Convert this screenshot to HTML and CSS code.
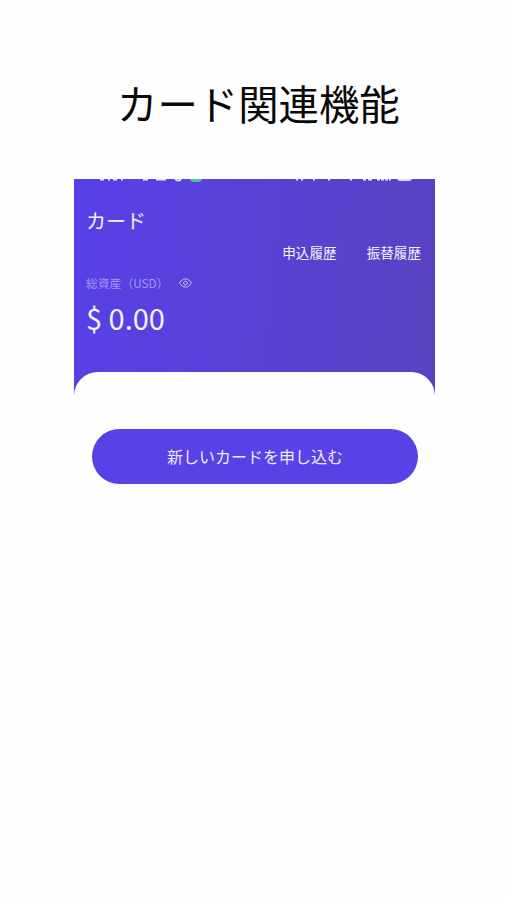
FILE: index.html
```html
<!DOCTYPE html>
<html lang="ja">
<head>
  <meta charset="utf-8">
  <title>カード関連機能</title>
  <link rel="stylesheet" href="styles.css">
</head>
<body>
  <h1>カード関連機能</h1>
  <div class="screen">
    <div class="header">
      <!-- lower edge of the status bar -->
      <svg class="status" width="361" height="4" viewBox="0 0 361 4" fill="none" stroke="#fff" stroke-opacity=".85">
        <path d="M26 .7h4M34 .7h2M39 .7h4M47 .7h2M69 .7h5M82 .7h10" stroke-width="1.4"/>
        <path d="M101 0q3.5 3 6 0" stroke-width="2"/>
        <path d="M116 0h12q-1 3-4 3h-4q-3 0-4-3z" fill="#43c9a4" stroke="none"/>
        <path d="M222 .7h2M227 .7h2M239 .7h2M254 .7h2M276 .7h2M289 .7h3M294 .7h4M303 .7h3M307 .7h3M311 .7h3M315 .7h2" stroke-width="1.4"/>
        <path d="M323 0h15q-1 2-3 2h-9q-2 0-3-2z" fill="#fff" fill-opacity=".8" stroke="none"/>
      </svg>
      <h2>カード</h2>
      <div class="links">
        <span>申込履歴</span>
        <span>振替履歴</span>
      </div>
      <div class="label">
        <span>総資産（USD）</span>
        <svg width="13" height="10" viewBox="0 0 13 10" fill="none" stroke="#c3bcf5">
          <path d="M.6 5C3.4-.5 9.6-.5 12.4 5 9.6 10.5 3.4 10.5.6 5z"/>
          <circle cx="6.5" cy="5" r="1.9"/>
        </svg>
      </div>
      <div class="amount">$ 0.00</div>
    </div>
    <div class="sheet">
      <button>新しいカードを申し込む</button>
    </div>
  </div>
</body>
</html>
```

FILE: styles.css
```css
body {
  margin: 0;
  background-color: #fefefe;
  font-family: "Noto Sans CJK JP", sans-serif;
}
h1 {
  margin: 73px 0 0 117px;
  font-size: 40.4px;
  line-height: 60px;
  font-weight: 400;
  color: #090909;
  white-space: nowrap;
}
.screen {
  width: 361px;
  margin: 46px 0 0 74px;
  background: linear-gradient(95deg, #5840e9, #5942c0) no-repeat;
  background-size: 100% 216px;
}
.header {
  height: 193px;
  color: #f3f0ff;
}
.status {
  display: block;
}
h2 {
  margin: 23px 0 0 12px;
  font-size: 20px;
  line-height: 30px;
  font-weight: 400;
}
.links {
  display: flex;
  justify-content: flex-end;
  gap: 30px;
  padding-right: 14px;
  margin-top: 6px;
  font-size: 13.6px;
  line-height: 20px;
}
.label {
  display: flex;
  align-items: center;
  margin: 12px 0 0 12px;
  font-size: 11.8px;
  line-height: 18px;
  color: #a398ed;
}
.label svg {
  margin-left: 10px;
}
.amount {
  margin: 3px 0 0 12px;
  font-size: 29px;
  line-height: 44px;
}
.sheet {
  height: 112px;
  padding: 57px 17px 0 18px;
  box-sizing: border-box;
  border-radius: 24px 24px 0 0;
  background-color: #fefefe;
}
button {
  display: block;
  width: 100%;
  height: 55px;
  padding: 0 0 2px;
  border: none;
  border-radius: 28px;
  background-color: #5941e8;
  color: #eeeaff;
  font-family: inherit;
  font-size: 16px;
}
```
